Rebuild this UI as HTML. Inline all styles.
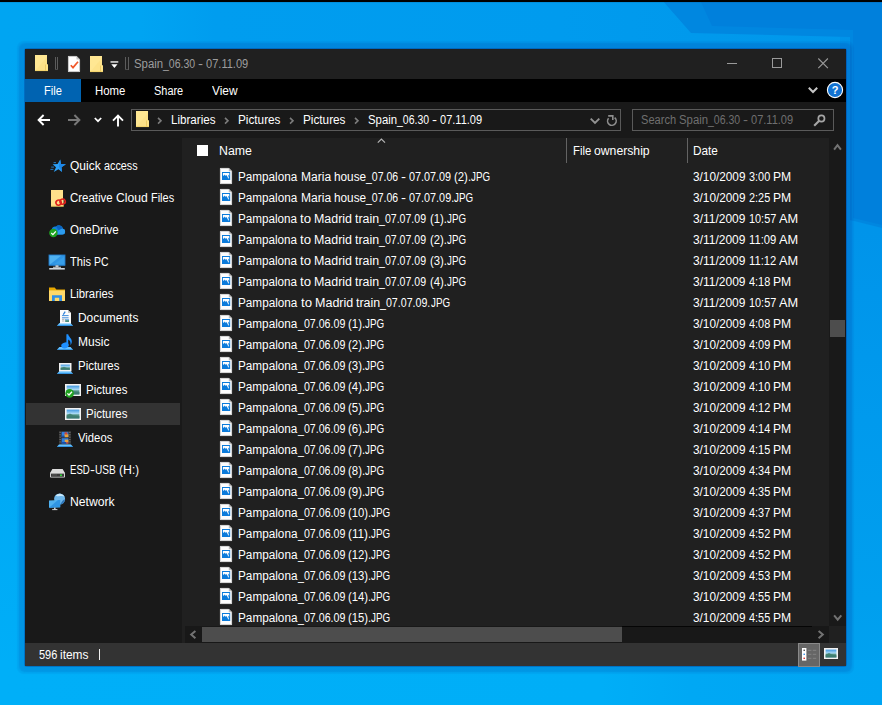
<!DOCTYPE html>
<html><head><meta charset="utf-8"><title>Spain_06.30 - 07.11.09</title>
<style>
html,body{margin:0;padding:0}
body{width:882px;height:705px;overflow:hidden;position:relative;background:#00a6f3;font:12px/14px "Liberation Sans",sans-serif;color:#fff}
.a{position:absolute}
#wall{left:0;top:0;width:882px;height:705px;background:linear-gradient(180deg,#00a5f2 0,#00a8f4 400px,#00aff8 705px)}
#wtop{left:0;top:0;width:882px;height:60px;background:linear-gradient(90deg,#00a5f2 0,#00a4f2 140px,#009def 215px,#009bee 560px,#0099ec 700px,#0097eb 882px)}
#wright{left:840px;top:0;width:42px;height:705px;background:linear-gradient(180deg,#0093e9 0,#0094ea 230px,#009aed 420px,#009fee 600px,#00a3f1 705px)}
#wbot{left:0;top:660px;width:882px;height:45px;background:linear-gradient(90deg,#00aff8 0,#00aef7 600px,#00a8f4 690px,#00a5f3 882px)}
#wblack{left:0;top:0;width:882px;height:2px;background:#000;box-shadow:0 0 1px #024}
#shadow{left:25px;top:49px;width:821px;height:617px;border-radius:2px;box-shadow:0 0 0 1px rgba(0,0,90,.22),0 0 1.5px 6px rgba(0,0,120,.095),0 0 1px 8px rgba(0,0,120,.05)}
#win{left:25px;top:49px;width:821px;height:617px;background:#191919;overflow:hidden}
#title{left:0;top:0;width:821px;height:30px;background:#202020}
#ribbon{left:0;top:30px;width:821px;height:23px;background:#000}
#filetab{left:0;top:30px;width:56px;height:23px;background:#0063b1}
#navbar{left:0;top:53px;width:821px;height:36px;background:#191919}
#addr{left:106px;top:60px;width:488px;height:20px;border:1px solid #5a5a5a;background:#191919}
#search{left:607px;top:60px;width:200px;height:20px;border:1px solid #5a5a5a;background:#191919}
#navpane{left:0;top:89px;width:157px;height:505px;background:#191919}
#sel{left:1px;top:354px;width:154px;height:22px;background:#333}
#list{left:157px;top:89px;width:647px;height:505px;background:#202020}
#vscroll{left:804px;top:89px;width:17px;height:488px;background:#191919}
#vthumb{left:805px;top:271px;width:15px;height:17px;background:#4d4d4d}
#hscroll{left:160px;top:577px;width:644px;height:17px;background:#181818}
#hline{left:597px;top:577px;width:190px;height:1px;background:#050505}
#hthumb{left:177px;top:578px;width:420px;height:15px;background:#4d4d4d}
#corner{left:804px;top:577px;width:17px;height:17px;background:#202020}
#status{left:0;top:594px;width:821px;height:23px;background:#333}
.colsep{width:1px;height:25px;top:89px;background:#636363}
#chk{left:172px;top:96px;width:11px;height:11px;background:#fff}
.t{position:absolute;white-space:pre;line-height:14px;font-size:12px;height:14px}
.t span{position:absolute;top:0;white-space:pre;transform-origin:0 50%}
svg{position:absolute;overflow:visible}

</style></head>
<body>
<div id="wall" class="a"></div>
<div id="wtop" class="a"></div>
<div id="wright" class="a"></div>
<div id="wbot" class="a"></div>
<svg style="left:0;top:0" width="882" height="705" viewBox="0 0 882 705"><path d="M662 0H882V228L850 220V37L691 33Z" fill="#0087e0"/><path d="M700 0H882V225L853 218V30L712 26Z" fill="#0080dc"/></svg>
<div id="wblack" class="a"></div>
<div id="shadow" class="a"></div>
<div id="win" class="a">
  <div id="title" class="a"></div>
  <div id="ribbon" class="a"></div>
  <div id="filetab" class="a"></div>
  <div id="navbar" class="a"></div>
  <div id="addr" class="a"></div>
  <div id="search" class="a"></div>
  <div id="navpane" class="a"></div>
  <div id="sel" class="a"></div>
  <div id="list" class="a"></div>
  <div class="a colsep" style="left:541px"></div>
  <div class="a colsep" style="left:661.5px"></div>
  <div id="chk" class="a"></div>
  <div id="vscroll" class="a"></div>
  <div id="vthumb" class="a"></div>
  <div id="hscroll" class="a"></div>
  <div id="hthumb" class="a"></div>
  <div id="hline" class="a"></div>
  <div id="corner" class="a"></div>
  <div id="status" class="a"></div>
</div>
<div id="icons" class="a" style="left:0;top:0">
<svg style="left:35px;top:55px" width="13" height="16" viewBox="0 0 13 16"><path d="M0 0H12V9.5H13V16H0Z" fill="#ffe591"/><path d="M0 0H12V16H0Z" fill="#ffe793"/><path d="M0 16L12 2V16Z" fill="#fbdf82" opacity=".55"/><path d="M10.5 9.5H13V16H10.5Z" fill="#ffe48a"/><path d="M10.5 9.5V16" stroke="#e9c65a" stroke-width=".8" fill="none"/><path d="M0 15.6H13" stroke="#f0cf63" stroke-width=".8"/></svg>
<svg style="left:90px;top:56px" width="13" height="16" viewBox="0 0 13 16"><path d="M0 0H12V9.5H13V16H0Z" fill="#ffe591"/><path d="M0 0H12V16H0Z" fill="#ffe793"/><path d="M0 16L12 2V16Z" fill="#fbdf82" opacity=".55"/><path d="M10.5 9.5H13V16H10.5Z" fill="#ffe48a"/><path d="M10.5 9.5V16" stroke="#e9c65a" stroke-width=".8" fill="none"/><path d="M0 15.6H13" stroke="#f0cf63" stroke-width=".8"/></svg>
<svg style="left:136px;top:111px" width="13" height="16" viewBox="0 0 13 16"><path d="M0 0H12V9.5H13V16H0Z" fill="#ffe591"/><path d="M0 0H12V16H0Z" fill="#ffe793"/><path d="M0 16L12 2V16Z" fill="#fbdf82" opacity=".55"/><path d="M10.5 9.5H13V16H10.5Z" fill="#ffe48a"/><path d="M10.5 9.5V16" stroke="#e9c65a" stroke-width=".8" fill="none"/><path d="M0 15.6H13" stroke="#f0cf63" stroke-width=".8"/></svg>
<div class="a" style="left:54.7px;top:57px;width:1px;height:12.5px;background:#5c5c5c"></div><div class="a" style="left:57.2px;top:57px;width:1px;height:12.5px;background:#5c5c5c"></div><div class="a" style="left:54.7px;top:69px;width:3px;height:1px;background:#4a4a4a"></div>
<div class="a" style="left:125.2px;top:57px;width:1px;height:12.5px;background:#5c5c5c"></div><div class="a" style="left:127.7px;top:57px;width:1px;height:12.5px;background:#5c5c5c"></div><div class="a" style="left:125.2px;top:69px;width:3px;height:1px;background:#4a4a4a"></div>
<svg style="left:68px;top:56px" width="12" height="16" viewBox="0 0 12 16"><path d="M0 0H8.5L12 3.5V16H0Z" fill="#fff"/><path d="M8.5 0V3.5H12Z" fill="#c8c8c8"/><path d="M.4 .4H8.3L11.6 3.7V15.6H.4Z" fill="none" stroke="#b5b5b5" stroke-width=".8"/><path d="M2.8 9.2L5 11.6L10 5.8" fill="none" stroke="#f0582a" stroke-width="1.7"/></svg>
<svg style="left:110px;top:60px" width="9" height="9" viewBox="0 0 9 9"><rect x=".5" y="1.3" width="7.8" height="1.3" fill="#fff"/><path d="M1.3 4.2H7.5L4.4 8Z" fill="#fff"/></svg>
<svg style="left:727px;top:58px" width="11" height="11" viewBox="0 0 11 11"><path d="M0 5.5H10" stroke="#9a9a9a" stroke-width="1"/></svg>
<svg style="left:772px;top:58px" width="11" height="11" viewBox="0 0 11 11"><rect x=".5" y=".5" width="9" height="9" fill="none" stroke="#9a9a9a" stroke-width="1"/></svg>
<svg style="left:818px;top:58px" width="11" height="11" viewBox="0 0 11 11"><path d="M.3 .5L9.9 10.1M9.9 .5L.3 10.1" stroke="#9a9a9a" stroke-width="1.1"/></svg>
<svg style="left:808px;top:86.8px" width="10" height="7" viewBox="0 0 10 7"><path d="M.8 .8L5 5L9.2 .8" fill="none" stroke="#c6c6c6" stroke-width="2"/></svg>
<svg style="left:826px;top:81px" width="18" height="18" viewBox="0 0 18 18"><circle cx="9" cy="9" r="7.6" fill="#1373d2" stroke="#fff" stroke-width="1.1"/><text x="9" y="13.4" font-family="Liberation Sans, sans-serif" font-weight="bold" font-size="11" fill="#fff" text-anchor="middle">?</text></svg>
<svg style="left:37px;top:114px" width="14" height="12" viewBox="0 0 14 12"><path d="M13 6H2M6.6 1L1.6 6L6.6 11" fill="none" stroke="#fff" stroke-width="1.9"/></svg>
<svg style="left:67px;top:114px" width="14" height="12" viewBox="0 0 14 12"><path d="M1 6H12M7.4 1L12.4 6L7.4 11" fill="none" stroke="#787878" stroke-width="1.9"/></svg>
<svg style="left:93.5px;top:116.5px" width="8" height="6" viewBox="0 0 8 6"><path d="M.8 1L4 4.2L7.2 1" fill="none" stroke="#fff" stroke-width="1.7"/></svg>
<svg style="left:112px;top:113.5px" width="12" height="13" viewBox="0 0 12 13"><path d="M6 12.5V1.8M1 6.6L6 1.6L11 6.6" fill="none" stroke="#fff" stroke-width="1.9"/></svg>
<svg style="left:157px;top:117px" width="6" height="8" viewBox="0 0 6 8"><path d="M1 .9L4 3.8L1 6.7" fill="none" stroke="#7c7c7c" stroke-width="1.6"/></svg>
<svg style="left:224px;top:117px" width="6" height="8" viewBox="0 0 6 8"><path d="M1 .9L4 3.8L1 6.7" fill="none" stroke="#7c7c7c" stroke-width="1.6"/></svg>
<svg style="left:289px;top:117px" width="6" height="8" viewBox="0 0 6 8"><path d="M1 .9L4 3.8L1 6.7" fill="none" stroke="#7c7c7c" stroke-width="1.6"/></svg>
<svg style="left:354px;top:117px" width="6" height="8" viewBox="0 0 6 8"><path d="M1 .9L4 3.8L1 6.7" fill="none" stroke="#7c7c7c" stroke-width="1.6"/></svg>
<svg style="left:590px;top:118px" width="10" height="7" viewBox="0 0 10 7"><path d="M.7 .7L5 5L9.3 .7" fill="none" stroke="#939393" stroke-width="1.9"/></svg>
<svg style="left:606px;top:114px" width="12" height="13" viewBox="0 0 12 13"><path d="M8.66 3.7A4.3 4.3 0 1 1 2.6 4.24" fill="none" stroke="#8e8e8e" stroke-width="1.6"/><path d="M2.2 1.9H6.8V6" fill="none" stroke="#8e8e8e" stroke-width="1.6"/></svg>
<svg style="left:813px;top:113px" width="14" height="14" viewBox="0 0 14 14"><circle cx="8.4" cy="5.5" r="3.1" fill="none" stroke="#a6a6a6" stroke-width="1.7"/><path d="M6.2 7.8L1.2 12.8" stroke="#a6a6a6" stroke-width="2.1"/></svg>
<svg style="left:377px;top:138px" width="9" height="5" viewBox="0 0 9 5"><path d="M.8 4.6L4.4 1L8 4.6" fill="none" stroke="#b4b4b4" stroke-width="1.2"/></svg>
<svg style="left:833px;top:143px" width="9" height="8" viewBox="0 0 9 8"><path d="M1.1 6.6L4.5 2.2L7.9 6.6" fill="none" stroke="#727272" stroke-width="2"/></svg>
<svg style="left:833px;top:614px" width="9" height="8" viewBox="0 0 9 8"><path d="M1.1 1.4L4.7 5.6L8.3 1.4" fill="none" stroke="#727272" stroke-width="2"/></svg>
<svg style="left:189.3px;top:630px" width="8" height="9" viewBox="0 0 8 9"><path d="M6.4 1L2.2 4.6L6.4 8.2" fill="none" stroke="#727272" stroke-width="2"/></svg>
<svg style="left:817px;top:630px" width="8" height="9" viewBox="0 0 8 9"><path d="M1.6 1L5.8 4.6L1.6 8.2" fill="none" stroke="#727272" stroke-width="2"/></svg>
<div class="a" style="left:798px;top:643px;width:20px;height:22px;background:#666;border:1px solid #8a8a8a"></div>
<svg style="left:802px;top:648px" width="14" height="13" viewBox="0 0 14 13"><rect x="0" y="0" width="4.4" height="12.6" fill="#fff"/><rect x="1.5" y="1.6" width="1.4" height="1.4" fill="#444"/><rect x="1.5" y="5.6" width="1.4" height="1.4" fill="#2a8be8"/><rect x="1.5" y="9.6" width="1.4" height="1.4" fill="#e02020"/><path d="M6 2.3H9.4M10.8 2.3H14.2M6 6.3H9.4M10.8 6.3H14.2M6 10.3H9.4M10.8 10.3H14.2" stroke="#8a8a8a" stroke-width=".8"/></svg>
<svg style="left:824px;top:648px" width="14" height="11" viewBox="0 0 14 11"><defs><linearGradient id="ps" x1="0" y1="0" x2="0" y2="1"><stop offset="0" stop-color="#3f97e0"/><stop offset=".45" stop-color="#a8d8f4"/><stop offset=".6" stop-color="#5d9c8c"/><stop offset="1" stop-color="#2f6f86"/></linearGradient></defs><rect x="0" y="0" width="14" height="11" fill="#f2f2f2"/><rect x="1.6" y="1.6" width="10.8" height="7.8" fill="url(#ps)"/><path d="M1.6 6.82 L5 4.95 L8 6.6 L12.4 7.26 V9.4 H1.6Z" fill="#3d7d6c" opacity=".8"/></svg>
<svg style="left:50px;top:159px" width="16" height="14" viewBox="0 0 16 14"><path d="M10.2 0.4L11.0 5.1L15.9 5.2L11.5 8.3L12.0 13.1L8.4 10.3L3.8 13.1L6.0 8.3L2.6 5.2L7.6 5.1Z" fill="#2c9ff5"/><path d="M10.2 0.4L11.0 5.1L15.9 5.2L11.5 8.3L12.0 13.1L8.9 7.4Z" fill="#1d86e6"/><path d="M3.6 3.6H6M1.2 8.1H4M.4 10.4H3.4" stroke="#2893ea" stroke-width=".9" opacity=".85"/></svg>
<svg style="left:50.5px;top:189.5px" width="16" height="17" viewBox="0 0 16 17"><path d="M0 0H12V10H12.6V16.5H0Z" fill="#ffe08a"/><path d="M0 16.1H12.6" stroke="#eec656" stroke-width=".8"/><ellipse cx="7.6" cy="12.6" rx="2.7" ry="2.5" fill="none" stroke="#e0211b" stroke-width="1.6" transform="rotate(-20 7.6 12.6)"/><ellipse cx="11.6" cy="11.6" rx="2.7" ry="2.5" fill="none" stroke="#e0211b" stroke-width="1.6" transform="rotate(-20 11.6 11.6)"/></svg>
<svg style="left:49px;top:223px" width="17" height="14" viewBox="0 0 17 14"><path d="M4.6 11.5H13.4A2.9 2.9 0 0 0 14 5.8A4 4 0 0 0 7 3.6A3.4 3.4 0 0 0 2.8 7.4A2.2 2.2 0 0 0 4.6 11.5Z" fill="#1180dc"/><path d="M7.5 11.5H13.4A2.9 2.9 0 0 0 14 5.8A3.2 3.2 0 0 0 9.6 7.2Z" fill="#2c9bee"/><path d="M7 3.6A4 4 0 0 1 13.6 5.2L9.6 7.2Z" fill="#0b63bf"/><circle cx="4.4" cy="10" r="4.2" fill="#1fa220"/><path d="M2.3 10L3.9 11.6L6.8 8.4" fill="none" stroke="#fff" stroke-width="1.3"/></svg>
<svg style="left:49px;top:255px" width="16" height="15" viewBox="0 0 16 15"><rect x="0" y="0" width="16" height="10.2" fill="#4fb1f0"/><path d="M0 10.2L13 0H16V10.2Z" fill="#2f95e4"/><path d="M4 10.2L16 1V10.2Z" fill="#3aa2ea" opacity=".7"/><rect x="0" y="0" width="16" height="10.2" fill="none" stroke="#1f79c9" stroke-width=".9"/><rect x="6.5" y="10.2" width="3" height="2" fill="#b9c3cc"/><rect x="4" y="11.8" width="8" height=".9" fill="#dfe5ea"/><rect x=".2" y="13" width="15.6" height="1.6" fill="#cfd6dc"/></svg>
<svg style="left:49px;top:287px" width="16" height="14" viewBox="0 0 16 14"><path d="M0 0.6H5.6L7.4 2.6H16V14H0Z" fill="#e9a800"/><path d="M0 3.4H16V14H0Z" fill="#ffd869"/><path d="M3 8.2H13V14H10.2V10.8H5.8V14H3Z" fill="#2f8ee6"/></svg>
<svg style="left:57px;top:323.3px" width="16" height="3" viewBox="0 0 16 3"><path d="M2.4 0H13.6L16 2.7H0Z" fill="#66c1ff"/><path d="M.8 1.9H15.2L16 2.7H0Z" fill="#2b93e8"/></svg>
<svg style="left:60px;top:310px" width="11" height="14" viewBox="0 0 11 14"><path d="M0 0H8L11 3V13.6H0Z" fill="#fbfbfb"/><path d="M8 0V3H11Z" fill="#c4c4c4"/><path d="M3.2 4.6L5.2 1.6" stroke="#2d7fd8" stroke-width="1.2"/><path d="M2 5.6H8.6M2 7.8H8.6" stroke="#2d7fd8" stroke-width=".9"/><path d="M2 9.4H4.4M2 11H4.4" stroke="#9a9a9a" stroke-width=".7"/><rect x="5.2" y="9" width="3.8" height="3" fill="#4f8f7c"/><rect x="5.2" y="9" width="3.8" height="1.2" fill="#7fb7e8"/></svg>
<svg style="left:57px;top:347.3px" width="16" height="3" viewBox="0 0 16 3"><path d="M2.4 0H13.6L16 2.7H0Z" fill="#66c1ff"/><path d="M.8 1.9H15.2L16 2.7H0Z" fill="#2b93e8"/></svg>
<svg style="left:61px;top:333.5px" width="12" height="15" viewBox="0 0 12 15"><ellipse cx="4" cy="11.4" rx="3.8" ry="2.9" fill="#1e90ff" transform="rotate(-18 4 11.4)"/><path d="M5.4 11.6V.3H7.2C7.6 3 10.8 4.2 10.8 7.6C10.8 9.4 10 10.6 9.4 11.2C9.9 9 9.4 6.6 7.2 5.6V11.6Z" fill="#1e90ff"/></svg>
<svg style="left:57px;top:371.3px" width="16" height="3" viewBox="0 0 16 3"><path d="M2.4 0H13.6L16 2.7H0Z" fill="#66c1ff"/><path d="M.8 1.9H15.2L16 2.7H0Z" fill="#2b93e8"/></svg>
<svg style="left:59px;top:363.3px" width="12.5" height="8.4" viewBox="0 0 12.5 8.4"><defs><linearGradient id="pl" x1="0" y1="0" x2="0" y2="1"><stop offset="0" stop-color="#3f97e0"/><stop offset=".45" stop-color="#a8d8f4"/><stop offset=".6" stop-color="#5d9c8c"/><stop offset="1" stop-color="#2f6f86"/></linearGradient></defs><rect x="0" y="0" width="12.5" height="8.4" fill="#f2f2f2"/><rect x="1.6" y="1.6" width="9.3" height="5.2" fill="url(#pl)"/><path d="M1.6 5.208 L5 3.78 L8 5.04 L10.9 5.544 V6.8 H1.6Z" fill="#3d7d6c" opacity=".8"/></svg>
<svg style="left:65px;top:384px" width="16" height="12" viewBox="0 0 16 12"><defs><linearGradient id="p1" x1="0" y1="0" x2="0" y2="1"><stop offset="0" stop-color="#3f97e0"/><stop offset=".45" stop-color="#a8d8f4"/><stop offset=".6" stop-color="#5d9c8c"/><stop offset="1" stop-color="#2f6f86"/></linearGradient></defs><rect x="0" y="0" width="16" height="12" fill="#f2f2f2"/><rect x="1.6" y="1.6" width="12.8" height="8.8" fill="url(#p1)"/><path d="M1.6 7.44 L5 5.4 L8 7.2 L14.4 7.92 V10.4 H1.6Z" fill="#3d7d6c" opacity=".8"/><circle cx="4.6" cy="9.4" r="4.3" fill="#21a121"/><path d="M2.4 9.4 L4 11 L7 7.7" fill="none" stroke="#fff" stroke-width="1.3"/></svg>
<svg style="left:65px;top:408px" width="16" height="12" viewBox="0 0 16 12"><defs><linearGradient id="p2" x1="0" y1="0" x2="0" y2="1"><stop offset="0" stop-color="#3f97e0"/><stop offset=".45" stop-color="#a8d8f4"/><stop offset=".6" stop-color="#5d9c8c"/><stop offset="1" stop-color="#2f6f86"/></linearGradient></defs><rect x="0" y="0" width="16" height="12" fill="#f2f2f2"/><rect x="1.6" y="1.6" width="12.8" height="8.8" fill="url(#p2)"/><path d="M1.6 7.44 L5 5.4 L8 7.2 L14.4 7.92 V10.4 H1.6Z" fill="#3d7d6c" opacity=".8"/></svg>
<svg style="left:57px;top:443.6px" width="16" height="3" viewBox="0 0 16 3"><path d="M2.4 0H13.6L16 2.7H0Z" fill="#66c1ff"/><path d="M.8 1.9H15.2L16 2.7H0Z" fill="#2b93e8"/></svg>
<svg style="left:59px;top:430.6px" width="12" height="13.4" viewBox="0 0 12 13.4"><rect x="0" y="0" width="12" height="13.4" fill="#2e2e2e"/><path d="M1.1 .8V13" stroke="#8c8c8c" stroke-width="1" stroke-dasharray="1.1 1.3"/><path d="M10.9 .8V13" stroke="#8c8c8c" stroke-width="1" stroke-dasharray="1.1 1.3"/><rect x="2.6" y=".8" width="6.8" height="5.4" fill="#2f7fe0"/><rect x="5.4" y="3.2" width="4" height="3" fill="#e8a23a"/><rect x="5.6" y="1.4" width="2.8" height="2" fill="#d8432b"/><rect x="2.6" y="4.6" width="3" height="1.6" fill="#1b4fa8"/><rect x="2.6" y="7.2" width="6.8" height="5.4" fill="#2f7fe0"/><rect x="5.8" y="8.6" width="3.6" height="2.6" fill="#e8a23a"/><rect x="2.6" y="11" width="4.4" height="1.6" fill="#1b4fa8"/><rect x="7.2" y="11.2" width="2.2" height="1.4" fill="#d8432b"/></svg>
<svg style="left:49.6px;top:468.6px" width="15" height="9" viewBox="0 0 15 9"><path d="M2.4 0H12.6L15 4H0Z" fill="#dcdcdc"/><rect x="0" y="3.8" width="15" height="4.8" rx=".8" fill="#e4e4e4"/><rect x=".9" y="4.6" width="13.2" height="3.2" fill="#3b3b3b"/><path d="M2 5.6H7M2 6.8H7" stroke="#5a5a5a" stroke-width=".6"/><circle cx="11" cy="6.2" r="1" fill="#33e03a"/></svg>
<svg style="left:49px;top:493px" width="17" height="18" viewBox="0 0 17 18"><circle cx="10.6" cy="6" r="5.5" fill="#6fb7ea"/><path d="M6.6 2.4A5.5 5.5 0 0 1 15.6 3.8C13 2 9.6 4.4 6.6 2.4Z" fill="#c8e8fa"/><path d="M16 6.6A5.5 5.5 0 0 1 11 11.5C13 9.6 12.6 7.4 16 6.6Z" fill="#2e75b8"/><path d="M0 7.4L11.2 7V14.2L0 14.8Z" fill="#4fb1f0"/><path d="M0 14.8L9 7.1L11.2 7V14.2Z" fill="#2f95e4"/><rect x="5" y="14.6" width="1.6" height="1.8" fill="#c4ccd3"/><rect x="3.2" y="16.2" width="5.2" height=".9" fill="#e4e9ed"/></svg>
<svg style="left:220px;top:168px" width="12" height="16" viewBox="0 0 12 16"><path d="M0 0H8.8L12 3.2V16H0Z" fill="#fdfdfd"/><path d="M8.8 0V3.2H12Z" fill="#bcbcbc"/><path d="M.35 .35H8.6L11.65 3.4V15.65H.35Z" fill="none" stroke="#b9b9b9" stroke-width=".7"/><rect x="2" y="4" width="8.2" height="8" fill="#0b7bdb"/><path d="M2.9 4.9H9.3V8L8.7 6.8L8.2 7.6L9 10.3L8.3 10.5L6.6 7L5.8 8.1L4.8 6.4L3.6 7.9L2.9 6.9Z" fill="#fff"/></svg>
<svg style="left:220px;top:189px" width="12" height="16" viewBox="0 0 12 16"><path d="M0 0H8.8L12 3.2V16H0Z" fill="#fdfdfd"/><path d="M8.8 0V3.2H12Z" fill="#bcbcbc"/><path d="M.35 .35H8.6L11.65 3.4V15.65H.35Z" fill="none" stroke="#b9b9b9" stroke-width=".7"/><rect x="2" y="4" width="8.2" height="8" fill="#0b7bdb"/><path d="M2.9 4.9H9.3V8L8.7 6.8L8.2 7.6L9 10.3L8.3 10.5L6.6 7L5.8 8.1L4.8 6.4L3.6 7.9L2.9 6.9Z" fill="#fff"/></svg>
<svg style="left:220px;top:210px" width="12" height="16" viewBox="0 0 12 16"><path d="M0 0H8.8L12 3.2V16H0Z" fill="#fdfdfd"/><path d="M8.8 0V3.2H12Z" fill="#bcbcbc"/><path d="M.35 .35H8.6L11.65 3.4V15.65H.35Z" fill="none" stroke="#b9b9b9" stroke-width=".7"/><rect x="2" y="4" width="8.2" height="8" fill="#0b7bdb"/><path d="M2.9 4.9H9.3V8L8.7 6.8L8.2 7.6L9 10.3L8.3 10.5L6.6 7L5.8 8.1L4.8 6.4L3.6 7.9L2.9 6.9Z" fill="#fff"/></svg>
<svg style="left:220px;top:231px" width="12" height="16" viewBox="0 0 12 16"><path d="M0 0H8.8L12 3.2V16H0Z" fill="#fdfdfd"/><path d="M8.8 0V3.2H12Z" fill="#bcbcbc"/><path d="M.35 .35H8.6L11.65 3.4V15.65H.35Z" fill="none" stroke="#b9b9b9" stroke-width=".7"/><rect x="2" y="4" width="8.2" height="8" fill="#0b7bdb"/><path d="M2.9 4.9H9.3V8L8.7 6.8L8.2 7.6L9 10.3L8.3 10.5L6.6 7L5.8 8.1L4.8 6.4L3.6 7.9L2.9 6.9Z" fill="#fff"/></svg>
<svg style="left:220px;top:252px" width="12" height="16" viewBox="0 0 12 16"><path d="M0 0H8.8L12 3.2V16H0Z" fill="#fdfdfd"/><path d="M8.8 0V3.2H12Z" fill="#bcbcbc"/><path d="M.35 .35H8.6L11.65 3.4V15.65H.35Z" fill="none" stroke="#b9b9b9" stroke-width=".7"/><rect x="2" y="4" width="8.2" height="8" fill="#0b7bdb"/><path d="M2.9 4.9H9.3V8L8.7 6.8L8.2 7.6L9 10.3L8.3 10.5L6.6 7L5.8 8.1L4.8 6.4L3.6 7.9L2.9 6.9Z" fill="#fff"/></svg>
<svg style="left:220px;top:273px" width="12" height="16" viewBox="0 0 12 16"><path d="M0 0H8.8L12 3.2V16H0Z" fill="#fdfdfd"/><path d="M8.8 0V3.2H12Z" fill="#bcbcbc"/><path d="M.35 .35H8.6L11.65 3.4V15.65H.35Z" fill="none" stroke="#b9b9b9" stroke-width=".7"/><rect x="2" y="4" width="8.2" height="8" fill="#0b7bdb"/><path d="M2.9 4.9H9.3V8L8.7 6.8L8.2 7.6L9 10.3L8.3 10.5L6.6 7L5.8 8.1L4.8 6.4L3.6 7.9L2.9 6.9Z" fill="#fff"/></svg>
<svg style="left:220px;top:294px" width="12" height="16" viewBox="0 0 12 16"><path d="M0 0H8.8L12 3.2V16H0Z" fill="#fdfdfd"/><path d="M8.8 0V3.2H12Z" fill="#bcbcbc"/><path d="M.35 .35H8.6L11.65 3.4V15.65H.35Z" fill="none" stroke="#b9b9b9" stroke-width=".7"/><rect x="2" y="4" width="8.2" height="8" fill="#0b7bdb"/><path d="M2.9 4.9H9.3V8L8.7 6.8L8.2 7.6L9 10.3L8.3 10.5L6.6 7L5.8 8.1L4.8 6.4L3.6 7.9L2.9 6.9Z" fill="#fff"/></svg>
<svg style="left:220px;top:315px" width="12" height="16" viewBox="0 0 12 16"><path d="M0 0H8.8L12 3.2V16H0Z" fill="#fdfdfd"/><path d="M8.8 0V3.2H12Z" fill="#bcbcbc"/><path d="M.35 .35H8.6L11.65 3.4V15.65H.35Z" fill="none" stroke="#b9b9b9" stroke-width=".7"/><rect x="2" y="4" width="8.2" height="8" fill="#0b7bdb"/><path d="M2.9 4.9H9.3V8L8.7 6.8L8.2 7.6L9 10.3L8.3 10.5L6.6 7L5.8 8.1L4.8 6.4L3.6 7.9L2.9 6.9Z" fill="#fff"/></svg>
<svg style="left:220px;top:336px" width="12" height="16" viewBox="0 0 12 16"><path d="M0 0H8.8L12 3.2V16H0Z" fill="#fdfdfd"/><path d="M8.8 0V3.2H12Z" fill="#bcbcbc"/><path d="M.35 .35H8.6L11.65 3.4V15.65H.35Z" fill="none" stroke="#b9b9b9" stroke-width=".7"/><rect x="2" y="4" width="8.2" height="8" fill="#0b7bdb"/><path d="M2.9 4.9H9.3V8L8.7 6.8L8.2 7.6L9 10.3L8.3 10.5L6.6 7L5.8 8.1L4.8 6.4L3.6 7.9L2.9 6.9Z" fill="#fff"/></svg>
<svg style="left:220px;top:357px" width="12" height="16" viewBox="0 0 12 16"><path d="M0 0H8.8L12 3.2V16H0Z" fill="#fdfdfd"/><path d="M8.8 0V3.2H12Z" fill="#bcbcbc"/><path d="M.35 .35H8.6L11.65 3.4V15.65H.35Z" fill="none" stroke="#b9b9b9" stroke-width=".7"/><rect x="2" y="4" width="8.2" height="8" fill="#0b7bdb"/><path d="M2.9 4.9H9.3V8L8.7 6.8L8.2 7.6L9 10.3L8.3 10.5L6.6 7L5.8 8.1L4.8 6.4L3.6 7.9L2.9 6.9Z" fill="#fff"/></svg>
<svg style="left:220px;top:378px" width="12" height="16" viewBox="0 0 12 16"><path d="M0 0H8.8L12 3.2V16H0Z" fill="#fdfdfd"/><path d="M8.8 0V3.2H12Z" fill="#bcbcbc"/><path d="M.35 .35H8.6L11.65 3.4V15.65H.35Z" fill="none" stroke="#b9b9b9" stroke-width=".7"/><rect x="2" y="4" width="8.2" height="8" fill="#0b7bdb"/><path d="M2.9 4.9H9.3V8L8.7 6.8L8.2 7.6L9 10.3L8.3 10.5L6.6 7L5.8 8.1L4.8 6.4L3.6 7.9L2.9 6.9Z" fill="#fff"/></svg>
<svg style="left:220px;top:399px" width="12" height="16" viewBox="0 0 12 16"><path d="M0 0H8.8L12 3.2V16H0Z" fill="#fdfdfd"/><path d="M8.8 0V3.2H12Z" fill="#bcbcbc"/><path d="M.35 .35H8.6L11.65 3.4V15.65H.35Z" fill="none" stroke="#b9b9b9" stroke-width=".7"/><rect x="2" y="4" width="8.2" height="8" fill="#0b7bdb"/><path d="M2.9 4.9H9.3V8L8.7 6.8L8.2 7.6L9 10.3L8.3 10.5L6.6 7L5.8 8.1L4.8 6.4L3.6 7.9L2.9 6.9Z" fill="#fff"/></svg>
<svg style="left:220px;top:420px" width="12" height="16" viewBox="0 0 12 16"><path d="M0 0H8.8L12 3.2V16H0Z" fill="#fdfdfd"/><path d="M8.8 0V3.2H12Z" fill="#bcbcbc"/><path d="M.35 .35H8.6L11.65 3.4V15.65H.35Z" fill="none" stroke="#b9b9b9" stroke-width=".7"/><rect x="2" y="4" width="8.2" height="8" fill="#0b7bdb"/><path d="M2.9 4.9H9.3V8L8.7 6.8L8.2 7.6L9 10.3L8.3 10.5L6.6 7L5.8 8.1L4.8 6.4L3.6 7.9L2.9 6.9Z" fill="#fff"/></svg>
<svg style="left:220px;top:441px" width="12" height="16" viewBox="0 0 12 16"><path d="M0 0H8.8L12 3.2V16H0Z" fill="#fdfdfd"/><path d="M8.8 0V3.2H12Z" fill="#bcbcbc"/><path d="M.35 .35H8.6L11.65 3.4V15.65H.35Z" fill="none" stroke="#b9b9b9" stroke-width=".7"/><rect x="2" y="4" width="8.2" height="8" fill="#0b7bdb"/><path d="M2.9 4.9H9.3V8L8.7 6.8L8.2 7.6L9 10.3L8.3 10.5L6.6 7L5.8 8.1L4.8 6.4L3.6 7.9L2.9 6.9Z" fill="#fff"/></svg>
<svg style="left:220px;top:462px" width="12" height="16" viewBox="0 0 12 16"><path d="M0 0H8.8L12 3.2V16H0Z" fill="#fdfdfd"/><path d="M8.8 0V3.2H12Z" fill="#bcbcbc"/><path d="M.35 .35H8.6L11.65 3.4V15.65H.35Z" fill="none" stroke="#b9b9b9" stroke-width=".7"/><rect x="2" y="4" width="8.2" height="8" fill="#0b7bdb"/><path d="M2.9 4.9H9.3V8L8.7 6.8L8.2 7.6L9 10.3L8.3 10.5L6.6 7L5.8 8.1L4.8 6.4L3.6 7.9L2.9 6.9Z" fill="#fff"/></svg>
<svg style="left:220px;top:483px" width="12" height="16" viewBox="0 0 12 16"><path d="M0 0H8.8L12 3.2V16H0Z" fill="#fdfdfd"/><path d="M8.8 0V3.2H12Z" fill="#bcbcbc"/><path d="M.35 .35H8.6L11.65 3.4V15.65H.35Z" fill="none" stroke="#b9b9b9" stroke-width=".7"/><rect x="2" y="4" width="8.2" height="8" fill="#0b7bdb"/><path d="M2.9 4.9H9.3V8L8.7 6.8L8.2 7.6L9 10.3L8.3 10.5L6.6 7L5.8 8.1L4.8 6.4L3.6 7.9L2.9 6.9Z" fill="#fff"/></svg>
<svg style="left:220px;top:504px" width="12" height="16" viewBox="0 0 12 16"><path d="M0 0H8.8L12 3.2V16H0Z" fill="#fdfdfd"/><path d="M8.8 0V3.2H12Z" fill="#bcbcbc"/><path d="M.35 .35H8.6L11.65 3.4V15.65H.35Z" fill="none" stroke="#b9b9b9" stroke-width=".7"/><rect x="2" y="4" width="8.2" height="8" fill="#0b7bdb"/><path d="M2.9 4.9H9.3V8L8.7 6.8L8.2 7.6L9 10.3L8.3 10.5L6.6 7L5.8 8.1L4.8 6.4L3.6 7.9L2.9 6.9Z" fill="#fff"/></svg>
<svg style="left:220px;top:525px" width="12" height="16" viewBox="0 0 12 16"><path d="M0 0H8.8L12 3.2V16H0Z" fill="#fdfdfd"/><path d="M8.8 0V3.2H12Z" fill="#bcbcbc"/><path d="M.35 .35H8.6L11.65 3.4V15.65H.35Z" fill="none" stroke="#b9b9b9" stroke-width=".7"/><rect x="2" y="4" width="8.2" height="8" fill="#0b7bdb"/><path d="M2.9 4.9H9.3V8L8.7 6.8L8.2 7.6L9 10.3L8.3 10.5L6.6 7L5.8 8.1L4.8 6.4L3.6 7.9L2.9 6.9Z" fill="#fff"/></svg>
<svg style="left:220px;top:546px" width="12" height="16" viewBox="0 0 12 16"><path d="M0 0H8.8L12 3.2V16H0Z" fill="#fdfdfd"/><path d="M8.8 0V3.2H12Z" fill="#bcbcbc"/><path d="M.35 .35H8.6L11.65 3.4V15.65H.35Z" fill="none" stroke="#b9b9b9" stroke-width=".7"/><rect x="2" y="4" width="8.2" height="8" fill="#0b7bdb"/><path d="M2.9 4.9H9.3V8L8.7 6.8L8.2 7.6L9 10.3L8.3 10.5L6.6 7L5.8 8.1L4.8 6.4L3.6 7.9L2.9 6.9Z" fill="#fff"/></svg>
<svg style="left:220px;top:567px" width="12" height="16" viewBox="0 0 12 16"><path d="M0 0H8.8L12 3.2V16H0Z" fill="#fdfdfd"/><path d="M8.8 0V3.2H12Z" fill="#bcbcbc"/><path d="M.35 .35H8.6L11.65 3.4V15.65H.35Z" fill="none" stroke="#b9b9b9" stroke-width=".7"/><rect x="2" y="4" width="8.2" height="8" fill="#0b7bdb"/><path d="M2.9 4.9H9.3V8L8.7 6.8L8.2 7.6L9 10.3L8.3 10.5L6.6 7L5.8 8.1L4.8 6.4L3.6 7.9L2.9 6.9Z" fill="#fff"/></svg>
<svg style="left:220px;top:588px" width="12" height="16" viewBox="0 0 12 16"><path d="M0 0H8.8L12 3.2V16H0Z" fill="#fdfdfd"/><path d="M8.8 0V3.2H12Z" fill="#bcbcbc"/><path d="M.35 .35H8.6L11.65 3.4V15.65H.35Z" fill="none" stroke="#b9b9b9" stroke-width=".7"/><rect x="2" y="4" width="8.2" height="8" fill="#0b7bdb"/><path d="M2.9 4.9H9.3V8L8.7 6.8L8.2 7.6L9 10.3L8.3 10.5L6.6 7L5.8 8.1L4.8 6.4L3.6 7.9L2.9 6.9Z" fill="#fff"/></svg>
<svg style="left:220px;top:609px" width="12" height="16" viewBox="0 0 12 16"><path d="M0 0H8.8L12 3.2V16H0Z" fill="#fdfdfd"/><path d="M8.8 0V3.2H12Z" fill="#bcbcbc"/><path d="M.35 .35H8.6L11.65 3.4V15.65H.35Z" fill="none" stroke="#b9b9b9" stroke-width=".7"/><rect x="2" y="4" width="8.2" height="8" fill="#0b7bdb"/><path d="M2.9 4.9H9.3V8L8.7 6.8L8.2 7.6L9 10.3L8.3 10.5L6.6 7L5.8 8.1L4.8 6.4L3.6 7.9L2.9 6.9Z" fill="#fff"/></svg>
<div class="a" style="left:99px;top:648.5px;width:1px;height:11.5px;background:#f0f0f0"></div>
</div>
<div id="texts" class="a" style="left:0;top:0">
<div class="t" style="left:134.0px;top:57.2px;color:#9d9d9d"><span style="left:0.0px;transform:scaleX(0.9503)">Spain</span><span style="left:29.2px;transform:scaleX(0.8772)">_06.30</span> <span style="left:64.4px;transform:scaleX(1.2577)">-</span> <span style="left:72.4px;transform:scaleX(0.9221)">07.11.09</span></div>
<div class="t" style="left:43.7px;top:83.8px;color:#fff"><span style="left:0.0px;transform:scaleX(0.9254)">File</span></div>
<div class="t" style="left:95.2px;top:83.8px;color:#fff"><span style="left:0.0px;transform:scaleX(0.9495)">Home</span></div>
<div class="t" style="left:154.4px;top:83.8px;color:#fff"><span style="left:0.0px;transform:scaleX(0.9116)">Share</span></div>
<div class="t" style="left:212.2px;top:83.8px;color:#fff"><span style="left:0.0px;transform:scaleX(0.9924)">View</span></div>
<div class="t" style="left:171.4px;top:113.3px;color:#fff"><span style="left:0.0px;transform:scaleX(0.9667)">Libraries</span></div>
<div class="t" style="left:238.0px;top:113.3px;color:#fff"><span style="left:0.0px;transform:scaleX(0.9802)">Pictures</span></div>
<div class="t" style="left:303.3px;top:113.3px;color:#fff"><span style="left:0.0px;transform:scaleX(0.9802)">Pictures</span></div>
<div class="t" style="left:368.2px;top:113.3px;color:#fff"><span style="left:0.0px;transform:scaleX(0.9470)">Spain</span><span style="left:29.1px;transform:scaleX(0.8742)">_06.30</span> <span style="left:64.2px;transform:scaleX(1.2533)">-</span> <span style="left:72.2px;transform:scaleX(0.9189)">07.11.09</span></div>
<div class="t" style="left:641.0px;top:113.3px;color:#6f6f6f"><span style="left:0.0px;transform:scaleX(0.9233)">Search</span> <span style="left:38.1px;transform:scaleX(0.9476)">Spain</span><span style="left:67.2px;transform:scaleX(0.8747)">_06.30</span> <span style="left:102.3px;transform:scaleX(1.2541)">-</span> <span style="left:110.4px;transform:scaleX(0.9195)">07.11.09</span></div>
<div class="t" style="left:219.0px;top:144.3px;color:#fff"><span style="left:0.0px;transform:scaleX(1.0276)">Name</span></div>
<div class="t" style="left:573.0px;top:144.3px;color:#fff"><span style="left:0.0px;transform:scaleX(0.9416)">File</span> <span style="left:21.2px;transform:scaleX(1.0173)">ownership</span></div>
<div class="t" style="left:693.0px;top:144.3px;color:#fff"><span style="left:0.0px;transform:scaleX(0.9819)">Date</span></div>
<div class="t" style="left:70.4px;top:159.1px;color:#fff"><span style="left:0.0px;transform:scaleX(0.9983)">Quick</span> <span style="left:33.6px;transform:scaleX(0.8994)">access</span></div>
<div class="t" style="left:70.4px;top:191.1px;color:#fff"><span style="left:0.0px;transform:scaleX(0.9557)">Creative</span> <span style="left:45.7px;transform:scaleX(1.0094)">Cloud</span> <span style="left:80.4px;transform:scaleX(0.9119)">Files</span></div>
<div class="t" style="left:70.4px;top:223.1px;color:#fff"><span style="left:0.0px;transform:scaleX(0.9588)">OneDrive</span></div>
<div class="t" style="left:70.4px;top:255.1px;color:#fff"><span style="left:0.0px;transform:scaleX(0.9239)">This</span> <span style="left:23.9px;transform:scaleX(0.8675)">PC</span></div>
<div class="t" style="left:70.4px;top:287.1px;color:#fff"><span style="left:0.0px;transform:scaleX(0.9428)">Libraries</span></div>
<div class="t" style="left:78.3px;top:311.1px;color:#fff"><span style="left:0.0px;transform:scaleX(0.9950)">Documents</span></div>
<div class="t" style="left:78.3px;top:335.1px;color:#fff"><span style="left:0.0px;transform:scaleX(1.0018)">Music</span></div>
<div class="t" style="left:78.3px;top:359.1px;color:#fff"><span style="left:0.0px;transform:scaleX(0.9548)">Pictures</span></div>
<div class="t" style="left:86.3px;top:383.1px;color:#fff"><span style="left:0.0px;transform:scaleX(0.9548)">Pictures</span></div>
<div class="t" style="left:86.3px;top:407.1px;color:#fff"><span style="left:0.0px;transform:scaleX(0.9548)">Pictures</span></div>
<div class="t" style="left:78.3px;top:431.1px;color:#fff"><span style="left:0.0px;transform:scaleX(0.9401)">Videos</span></div>
<div class="t" style="left:70.4px;top:463.1px;color:#fff"><span style="left:0.0px;transform:scaleX(0.8007)">ESD</span><span style="left:19.8px;transform:scaleX(1.2355)">-</span><span style="left:24.7px;transform:scaleX(0.8408)">USB</span> <span style="left:48.4px;transform:scaleX(0.9884)">(</span><span style="left:52.4px;transform:scaleX(1.0258)">H</span><span style="left:61.3px;transform:scaleX(0.9421)">:)</span></div>
<div class="t" style="left:70.4px;top:495.1px;color:#fff"><span style="left:0.0px;transform:scaleX(1.0133)">Network</span></div>
<div class="t" style="left:39.0px;top:647.7px;color:#fff"><span style="left:0.0px;transform:scaleX(0.9151)">596</span> <span style="left:21.4px;transform:scaleX(0.9945)">items</span></div>
<div class="t" style="left:238.4px;top:170.4px;color:#fff"><span style="left:0.0px;transform:scaleX(0.9752)">Pampalona</span> <span style="left:62.2px;transform:scaleX(1.0031)">Maria</span> <span style="left:95.3px;transform:scaleX(0.9820)">house</span><span style="left:127.5px;transform:scaleX(0.8750)">_07.06</span> <span style="left:162.6px;transform:scaleX(1.2545)">-</span> <span style="left:170.6px;transform:scaleX(0.9022)">07.07.09</span> <span style="left:215.8px;transform:scaleX(0.9478)">(2).</span><span style="left:232.8px;transform:scaleX(0.8168)">JPG</span></div>
<div class="t" style="left:693.0px;top:170.4px;color:#fff"><span style="left:0.0px;transform:scaleX(0.9830)">3/10/2009</span> <span style="left:55.5px;transform:scaleX(0.9073)">3:00</span> <span style="left:79.7px;transform:scaleX(1.0093)">PM</span></div>
<div class="t" style="left:238.4px;top:191.4px;color:#fff"><span style="left:0.0px;transform:scaleX(0.9754)">Pampalona</span> <span style="left:62.2px;transform:scaleX(1.0033)">Maria</span> <span style="left:95.4px;transform:scaleX(0.9823)">house</span><span style="left:127.5px;transform:scaleX(0.8752)">_07.06</span> <span style="left:162.6px;transform:scaleX(1.2548)">-</span> <span style="left:170.7px;transform:scaleX(0.9026)">07.07.09.</span><span style="left:215.8px;transform:scaleX(0.8171)">JPG</span></div>
<div class="t" style="left:693.0px;top:191.4px;color:#fff"><span style="left:0.0px;transform:scaleX(0.9830)">3/10/2009</span> <span style="left:55.5px;transform:scaleX(0.9073)">2:25</span> <span style="left:79.7px;transform:scaleX(1.0093)">PM</span></div>
<div class="t" style="left:238.4px;top:212.4px;color:#fff"><span style="left:0.0px;transform:scaleX(0.9725)">Pampalona</span> <span style="left:62.1px;transform:scaleX(1.0993)">to</span> <span style="left:76.1px;transform:scaleX(1.0367)">Madrid</span> <span style="left:117.1px;transform:scaleX(1.0290)">train</span><span style="left:141.1px;transform:scaleX(0.8811)">_07.07.09</span> <span style="left:191.2px;transform:scaleX(0.9453)">(1).</span><span style="left:208.2px;transform:scaleX(0.8146)">JPG</span></div>
<div class="t" style="left:693.0px;top:212.4px;color:#fff"><span style="left:0.0px;transform:scaleX(0.9990)">3/11/2009</span> <span style="left:55.5px;transform:scaleX(0.9068)">10:57</span> <span style="left:85.7px;transform:scaleX(1.0647)">AM</span></div>
<div class="t" style="left:238.4px;top:233.4px;color:#fff"><span style="left:0.0px;transform:scaleX(0.9725)">Pampalona</span> <span style="left:62.1px;transform:scaleX(1.0993)">to</span> <span style="left:76.1px;transform:scaleX(1.0367)">Madrid</span> <span style="left:117.1px;transform:scaleX(1.0290)">train</span><span style="left:141.1px;transform:scaleX(0.8811)">_07.07.09</span> <span style="left:191.2px;transform:scaleX(0.9453)">(2).</span><span style="left:208.2px;transform:scaleX(0.8146)">JPG</span></div>
<div class="t" style="left:693.0px;top:233.4px;color:#fff"><span style="left:0.0px;transform:scaleX(0.9990)">3/11/2009</span> <span style="left:55.5px;transform:scaleX(0.9346)">11:09</span> <span style="left:85.7px;transform:scaleX(1.0647)">AM</span></div>
<div class="t" style="left:238.4px;top:254.4px;color:#fff"><span style="left:0.0px;transform:scaleX(0.9725)">Pampalona</span> <span style="left:62.1px;transform:scaleX(1.0993)">to</span> <span style="left:76.1px;transform:scaleX(1.0367)">Madrid</span> <span style="left:117.1px;transform:scaleX(1.0290)">train</span><span style="left:141.1px;transform:scaleX(0.8811)">_07.07.09</span> <span style="left:191.2px;transform:scaleX(0.9453)">(3).</span><span style="left:208.2px;transform:scaleX(0.8146)">JPG</span></div>
<div class="t" style="left:693.0px;top:254.4px;color:#fff"><span style="left:0.0px;transform:scaleX(0.9990)">3/11/2009</span> <span style="left:55.5px;transform:scaleX(0.9346)">11:12</span> <span style="left:85.7px;transform:scaleX(1.0647)">AM</span></div>
<div class="t" style="left:238.4px;top:275.4px;color:#fff"><span style="left:0.0px;transform:scaleX(0.9725)">Pampalona</span> <span style="left:62.1px;transform:scaleX(1.0993)">to</span> <span style="left:76.1px;transform:scaleX(1.0367)">Madrid</span> <span style="left:117.1px;transform:scaleX(1.0290)">train</span><span style="left:141.1px;transform:scaleX(0.8811)">_07.07.09</span> <span style="left:191.2px;transform:scaleX(0.9453)">(4).</span><span style="left:208.2px;transform:scaleX(0.8146)">JPG</span></div>
<div class="t" style="left:693.0px;top:275.4px;color:#fff"><span style="left:0.0px;transform:scaleX(0.9997)">3/11/2009</span> <span style="left:55.5px;transform:scaleX(0.9073)">4:18</span> <span style="left:79.7px;transform:scaleX(1.0093)">PM</span></div>
<div class="t" style="left:238.4px;top:296.4px;color:#fff"><span style="left:0.0px;transform:scaleX(0.9782)">Pampalona</span> <span style="left:62.4px;transform:scaleX(1.1056)">to</span> <span style="left:76.5px;transform:scaleX(1.0427)">Madrid</span> <span style="left:117.8px;transform:scaleX(1.0350)">train</span><span style="left:141.9px;transform:scaleX(0.8874)">_07.07.09.</span><span style="left:192.3px;transform:scaleX(0.8193)">JPG</span></div>
<div class="t" style="left:693.0px;top:296.4px;color:#fff"><span style="left:0.0px;transform:scaleX(0.9990)">3/11/2009</span> <span style="left:55.5px;transform:scaleX(0.9068)">10:57</span> <span style="left:85.7px;transform:scaleX(1.0647)">AM</span></div>
<div class="t" style="left:238.4px;top:317.4px;color:#fff"><span style="left:0.0px;transform:scaleX(0.9777)">Pampalona</span><span style="left:59.4px;transform:scaleX(0.8858)">_07.06.09</span> <span style="left:109.7px;transform:scaleX(0.9503)">(1).</span><span style="left:126.8px;transform:scaleX(0.8190)">JPG</span></div>
<div class="t" style="left:693.0px;top:317.4px;color:#fff"><span style="left:0.0px;transform:scaleX(0.9830)">3/10/2009</span> <span style="left:55.5px;transform:scaleX(0.9073)">4:08</span> <span style="left:79.7px;transform:scaleX(1.0093)">PM</span></div>
<div class="t" style="left:238.4px;top:338.4px;color:#fff"><span style="left:0.0px;transform:scaleX(0.9777)">Pampalona</span><span style="left:59.4px;transform:scaleX(0.8858)">_07.06.09</span> <span style="left:109.7px;transform:scaleX(0.9503)">(2).</span><span style="left:126.8px;transform:scaleX(0.8190)">JPG</span></div>
<div class="t" style="left:693.0px;top:338.4px;color:#fff"><span style="left:0.0px;transform:scaleX(0.9830)">3/10/2009</span> <span style="left:55.5px;transform:scaleX(0.9073)">4:09</span> <span style="left:79.7px;transform:scaleX(1.0093)">PM</span></div>
<div class="t" style="left:238.4px;top:359.4px;color:#fff"><span style="left:0.0px;transform:scaleX(0.9777)">Pampalona</span><span style="left:59.4px;transform:scaleX(0.8858)">_07.06.09</span> <span style="left:109.7px;transform:scaleX(0.9503)">(3).</span><span style="left:126.8px;transform:scaleX(0.8190)">JPG</span></div>
<div class="t" style="left:693.0px;top:359.4px;color:#fff"><span style="left:0.0px;transform:scaleX(0.9830)">3/10/2009</span> <span style="left:55.5px;transform:scaleX(0.9073)">4:10</span> <span style="left:79.7px;transform:scaleX(1.0093)">PM</span></div>
<div class="t" style="left:238.4px;top:380.4px;color:#fff"><span style="left:0.0px;transform:scaleX(0.9777)">Pampalona</span><span style="left:59.4px;transform:scaleX(0.8858)">_07.06.09</span> <span style="left:109.7px;transform:scaleX(0.9503)">(4).</span><span style="left:126.8px;transform:scaleX(0.8190)">JPG</span></div>
<div class="t" style="left:693.0px;top:380.4px;color:#fff"><span style="left:0.0px;transform:scaleX(0.9830)">3/10/2009</span> <span style="left:55.5px;transform:scaleX(0.9073)">4:10</span> <span style="left:79.7px;transform:scaleX(1.0093)">PM</span></div>
<div class="t" style="left:238.4px;top:401.4px;color:#fff"><span style="left:0.0px;transform:scaleX(0.9777)">Pampalona</span><span style="left:59.4px;transform:scaleX(0.8858)">_07.06.09</span> <span style="left:109.7px;transform:scaleX(0.9503)">(5).</span><span style="left:126.8px;transform:scaleX(0.8190)">JPG</span></div>
<div class="t" style="left:693.0px;top:401.4px;color:#fff"><span style="left:0.0px;transform:scaleX(0.9830)">3/10/2009</span> <span style="left:55.5px;transform:scaleX(0.9073)">4:12</span> <span style="left:79.7px;transform:scaleX(1.0093)">PM</span></div>
<div class="t" style="left:238.4px;top:422.4px;color:#fff"><span style="left:0.0px;transform:scaleX(0.9777)">Pampalona</span><span style="left:59.4px;transform:scaleX(0.8858)">_07.06.09</span> <span style="left:109.7px;transform:scaleX(0.9503)">(6).</span><span style="left:126.8px;transform:scaleX(0.8190)">JPG</span></div>
<div class="t" style="left:693.0px;top:422.4px;color:#fff"><span style="left:0.0px;transform:scaleX(0.9830)">3/10/2009</span> <span style="left:55.5px;transform:scaleX(0.9073)">4:14</span> <span style="left:79.7px;transform:scaleX(1.0093)">PM</span></div>
<div class="t" style="left:238.4px;top:443.4px;color:#fff"><span style="left:0.0px;transform:scaleX(0.9777)">Pampalona</span><span style="left:59.4px;transform:scaleX(0.8858)">_07.06.09</span> <span style="left:109.7px;transform:scaleX(0.9503)">(7).</span><span style="left:126.8px;transform:scaleX(0.8190)">JPG</span></div>
<div class="t" style="left:693.0px;top:443.4px;color:#fff"><span style="left:0.0px;transform:scaleX(0.9830)">3/10/2009</span> <span style="left:55.5px;transform:scaleX(0.9073)">4:15</span> <span style="left:79.7px;transform:scaleX(1.0093)">PM</span></div>
<div class="t" style="left:238.4px;top:464.4px;color:#fff"><span style="left:0.0px;transform:scaleX(0.9777)">Pampalona</span><span style="left:59.4px;transform:scaleX(0.8858)">_07.06.09</span> <span style="left:109.7px;transform:scaleX(0.9503)">(8).</span><span style="left:126.8px;transform:scaleX(0.8190)">JPG</span></div>
<div class="t" style="left:693.0px;top:464.4px;color:#fff"><span style="left:0.0px;transform:scaleX(0.9830)">3/10/2009</span> <span style="left:55.5px;transform:scaleX(0.9073)">4:34</span> <span style="left:79.7px;transform:scaleX(1.0093)">PM</span></div>
<div class="t" style="left:238.4px;top:485.4px;color:#fff"><span style="left:0.0px;transform:scaleX(0.9777)">Pampalona</span><span style="left:59.4px;transform:scaleX(0.8858)">_07.06.09</span> <span style="left:109.7px;transform:scaleX(0.9503)">(9).</span><span style="left:126.8px;transform:scaleX(0.8190)">JPG</span></div>
<div class="t" style="left:693.0px;top:485.4px;color:#fff"><span style="left:0.0px;transform:scaleX(0.9830)">3/10/2009</span> <span style="left:55.5px;transform:scaleX(0.9073)">4:35</span> <span style="left:79.7px;transform:scaleX(1.0093)">PM</span></div>
<div class="t" style="left:238.4px;top:506.4px;color:#fff"><span style="left:0.0px;transform:scaleX(0.9794)">Pampalona</span><span style="left:59.5px;transform:scaleX(0.8873)">_07.06.09</span> <span style="left:109.9px;transform:scaleX(0.9390)">(10).</span><span style="left:133.0px;transform:scaleX(0.8204)">JPG</span></div>
<div class="t" style="left:693.0px;top:506.4px;color:#fff"><span style="left:0.0px;transform:scaleX(0.9830)">3/10/2009</span> <span style="left:55.5px;transform:scaleX(0.9073)">4:37</span> <span style="left:79.7px;transform:scaleX(1.0093)">PM</span></div>
<div class="t" style="left:238.4px;top:527.4px;color:#fff"><span style="left:0.0px;transform:scaleX(0.9794)">Pampalona</span><span style="left:59.5px;transform:scaleX(0.8873)">_07.06.09</span> <span style="left:109.9px;transform:scaleX(0.9742)">(11).</span><span style="left:133.0px;transform:scaleX(0.8204)">JPG</span></div>
<div class="t" style="left:693.0px;top:527.4px;color:#fff"><span style="left:0.0px;transform:scaleX(0.9830)">3/10/2009</span> <span style="left:55.5px;transform:scaleX(0.9073)">4:52</span> <span style="left:79.7px;transform:scaleX(1.0093)">PM</span></div>
<div class="t" style="left:238.4px;top:548.4px;color:#fff"><span style="left:0.0px;transform:scaleX(0.9794)">Pampalona</span><span style="left:59.5px;transform:scaleX(0.8873)">_07.06.09</span> <span style="left:109.9px;transform:scaleX(0.9390)">(12).</span><span style="left:133.0px;transform:scaleX(0.8204)">JPG</span></div>
<div class="t" style="left:693.0px;top:548.4px;color:#fff"><span style="left:0.0px;transform:scaleX(0.9830)">3/10/2009</span> <span style="left:55.5px;transform:scaleX(0.9073)">4:52</span> <span style="left:79.7px;transform:scaleX(1.0093)">PM</span></div>
<div class="t" style="left:238.4px;top:569.4px;color:#fff"><span style="left:0.0px;transform:scaleX(0.9794)">Pampalona</span><span style="left:59.5px;transform:scaleX(0.8873)">_07.06.09</span> <span style="left:109.9px;transform:scaleX(0.9390)">(13).</span><span style="left:133.0px;transform:scaleX(0.8204)">JPG</span></div>
<div class="t" style="left:693.0px;top:569.4px;color:#fff"><span style="left:0.0px;transform:scaleX(0.9830)">3/10/2009</span> <span style="left:55.5px;transform:scaleX(0.9073)">4:53</span> <span style="left:79.7px;transform:scaleX(1.0093)">PM</span></div>
<div class="t" style="left:238.4px;top:590.4px;color:#fff"><span style="left:0.0px;transform:scaleX(0.9794)">Pampalona</span><span style="left:59.5px;transform:scaleX(0.8873)">_07.06.09</span> <span style="left:109.9px;transform:scaleX(0.9390)">(14).</span><span style="left:133.0px;transform:scaleX(0.8204)">JPG</span></div>
<div class="t" style="left:693.0px;top:590.4px;color:#fff"><span style="left:0.0px;transform:scaleX(0.9830)">3/10/2009</span> <span style="left:55.5px;transform:scaleX(0.9073)">4:55</span> <span style="left:79.7px;transform:scaleX(1.0093)">PM</span></div>
<div class="t" style="left:238.4px;top:611.4px;color:#fff"><span style="left:0.0px;transform:scaleX(0.9794)">Pampalona</span><span style="left:59.5px;transform:scaleX(0.8873)">_07.06.09</span> <span style="left:109.9px;transform:scaleX(0.9390)">(15).</span><span style="left:133.0px;transform:scaleX(0.8204)">JPG</span></div>
<div class="t" style="left:693.0px;top:611.4px;color:#fff"><span style="left:0.0px;transform:scaleX(0.9830)">3/10/2009</span> <span style="left:55.5px;transform:scaleX(0.9073)">4:55</span> <span style="left:79.7px;transform:scaleX(1.0093)">PM</span></div>
</div>

</body></html>
